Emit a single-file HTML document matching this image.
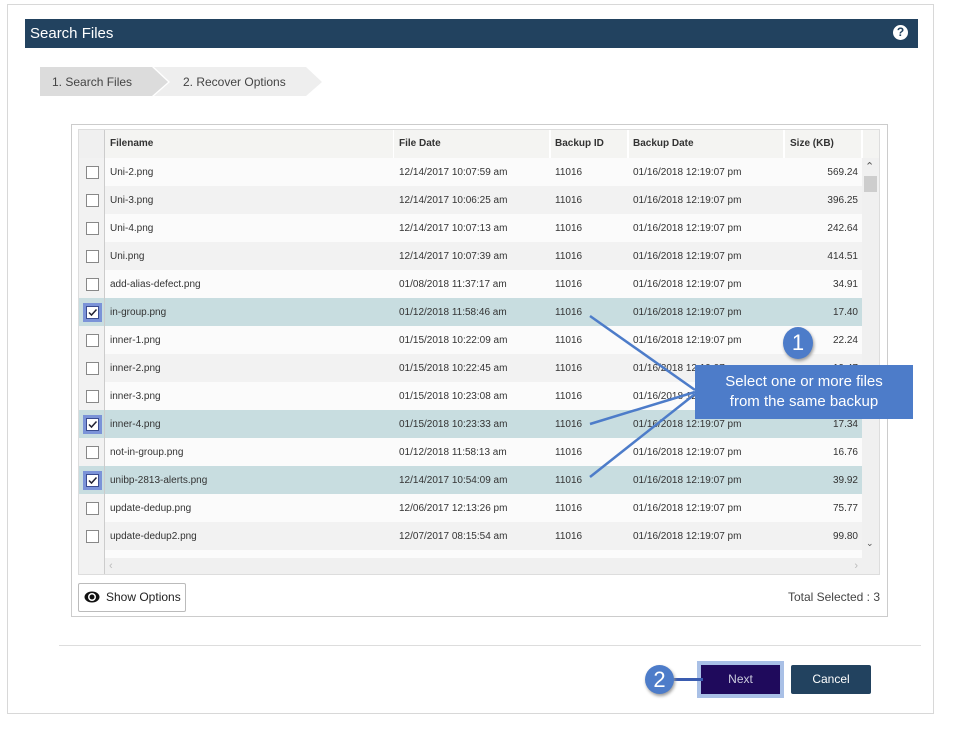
<!DOCTYPE html>
<html><head><meta charset="utf-8"><style>
*{box-sizing:border-box;margin:0;padding:0}
body{width:964px;height:735px;background:#fff;font-family:"Liberation Sans",Arial,sans-serif;position:relative;overflow:hidden}
.abs{position:absolute}
.outer{left:7px;top:4px;width:927px;height:710px;border:1px solid #d8d8d8}
.hdr{left:25px;top:19px;width:893px;height:29px;background:#22425f;color:#fff;font-size:15px;line-height:29px;padding-left:5px}
.help{right:10px;top:6px;width:15px;height:15px;border-radius:50%;background:#fff;color:#22425f;font-weight:bold;font-size:12px;line-height:15px;text-align:center}
.panel{left:71px;top:124px;width:817px;height:493px;border:1px solid #ccc}
.grid{left:78px;top:129px;width:802px;height:446px;border:1px solid #ddd;background:#f0f0f0;overflow:hidden}
.row{position:absolute;left:0;height:28px;width:783px;font-size:10px;color:#333}
.row span{position:absolute;top:1px;line-height:28px}
.cb{position:absolute;left:7px;top:8px;width:13px;height:13px;border:1px solid #888;background:#fff}
.cbcol{position:absolute;left:0;top:0;width:26px;height:28px;background:#f2f2f2;border-right:1px solid #ccc}
.sel .cbcol{background:#c8dde0}
.sel .cb{background:#fff;border-color:#3a4c90;box-shadow:0 0 0 3px #7b93d8}
.th{font-weight:bold;background:#f4f4f2}
.btn{font-size:12px;text-align:center;line-height:29px;color:#fff}
</style></head><body>
<div class="abs outer"></div>
<div class="abs hdr">Search Files<div class="abs help">?</div></div>
<svg class="abs" style="left:40px;top:67px" width="290" height="30">
<polygon points="0,0 112,0 128,15 112,29 0,29" fill="#dcdcdc"/>
<polygon points="114,0 266,0 282,15 266,29 114,29 130,15" fill="#eeeeee"/>
<text x="12" y="19" font-size="12" fill="#444" font-family="Liberation Sans">1. Search Files</text>
<text x="143" y="19" font-size="12" fill="#444" font-family="Liberation Sans">2. Recover Options</text>
</svg>
<div class="abs panel"></div>
<div class="abs grid">
<div class="row th" style="top:0;background:#f4f4f2;width:800px"><div class="cbcol" style="background:#f0f0f0"></div>
<span style="left:31px;top:0">Filename</span><span style="left:320px;top:0">File Date</span><span style="left:476px;top:0">Backup ID</span><span style="left:554px;top:0">Backup Date</span><span style="left:711px;top:0">Size (KB)</span>
<i style="position:absolute;left:314px;top:0;width:1px;height:28px;background:#fff"></i><i style="position:absolute;left:470px;top:0;width:2px;height:28px;background:#fff"></i><i style="position:absolute;left:548px;top:0;width:2px;height:28px;background:#fff"></i><i style="position:absolute;left:704px;top:0;width:2px;height:28px;background:#fff"></i><i style="position:absolute;left:782px;top:0;width:2px;height:28px;background:#fff"></i></div>
<div id="rows"></div>
<div style="position:absolute;left:783px;top:28px;width:17px;height:400px;background:#f0f0f0"></div>
<div style="position:absolute;left:785px;top:46px;width:13px;height:16px;background:#cdcdcd"></div>
<div style="position:absolute;left:786px;top:30px;font-size:11px;color:#555">&#8963;</div>
<div style="position:absolute;left:787px;top:408px;font-size:9px;color:#555">&#8964;</div>
<div style="position:absolute;left:26px;top:428px;width:757px;height:17px;background:#f0f0f0;font-size:11px;color:#bbb;line-height:17px"><span style="position:absolute;left:4px">&lsaquo;</span><span style="position:absolute;right:4px">&rsaquo;</span></div>
</div>
<div class="abs" style="left:78px;top:583px;width:108px;height:29px;border:1px solid #bbb;border-radius:2px;font-size:12px;line-height:27px;padding-left:27px;color:#222">Show Options
<svg style="position:absolute;left:5px;top:6px" width="16" height="14"><ellipse cx="8" cy="7" rx="7.5" ry="5.5" fill="#111"/><circle cx="8" cy="7" r="4" fill="#fff"/><circle cx="8" cy="7" r="2.5" fill="#111"/></svg></div>
<div class="abs" style="right:84px;top:590px;font-size:12px;color:#444">Total Selected : 3</div>
<div class="abs" style="left:59px;top:645px;width:862px;height:1px;background:#ddd"></div>
<div class="abs" style="left:697px;top:661px;width:87px;height:37px;background:#a9c0e6"></div>
<div class="abs btn" style="left:701px;top:665px;width:79px;height:29px;background:#1f0a5c;color:#ccd">Next</div>
<div class="abs btn" style="left:791px;top:665px;width:80px;height:29px;background:#22425f;border-radius:2px">Cancel</div>
<div class="abs" style="left:673px;top:678px;width:30px;height:3px;background:#3a5cb0"></div>
<div class="abs" style="left:645px;top:665px;width:29px;height:29px;border-radius:50%;background:#4d7cc9;color:#fff;font-size:22px;text-align:center;line-height:29px;box-shadow:1px 2px 3px #999">2</div>
<svg class="abs" style="left:0;top:0" width="964" height="735"><g stroke="#4d7cc9" stroke-width="2.5"><line x1="590" y1="316" x2="695" y2="390"/><line x1="590" y1="424" x2="695" y2="392"/><line x1="590" y1="477" x2="695" y2="394"/></g></svg>
<div class="abs" style="left:783px;top:327px;width:30px;height:32px;border-radius:50%;background:#4d7cc9;color:#fff;font-size:22px;text-align:center;line-height:32px;box-shadow:1px 2px 3px #999">1</div>
<div class="abs" style="left:695px;top:365px;width:218px;height:54px;background:#4d7cc9;color:#fff;font-size:15px;text-align:center;line-height:20px;padding-top:7px">Select one or more files<br>from the same backup</div>
<script>
var d=[["Uni-2.png","12/14/2017 10:07:59 am","569.24"],["Uni-3.png","12/14/2017 10:06:25 am","396.25"],["Uni-4.png","12/14/2017 10:07:13 am","242.64"],["Uni.png","12/14/2017 10:07:39 am","414.51"],["add-alias-defect.png","01/08/2018 11:37:17 am","34.91"],["in-group.png","01/12/2018 11:58:46 am","17.40",1],["inner-1.png","01/15/2018 10:22:09 am","22.24"],["inner-2.png","01/15/2018 10:22:45 am","19.47"],["inner-3.png","01/15/2018 10:23:08 am","11.02"],["inner-4.png","01/15/2018 10:23:33 am","17.34",1],["not-in-group.png","01/12/2018 11:58:13 am","16.76"],["unibp-2813-alerts.png","12/14/2017 10:54:09 am","39.92",1],["update-dedup.png","12/06/2017 12:13:26 pm","75.77"],["update-dedup2.png","12/07/2017 08:15:54 am","99.80"],["","","",0,1]];
var h="";d.forEach(function(r,i){var bg=r[3]?"#c8dde0":(i%2?"#f2f2f2":"#fbfbfb");h+='<div class="row'+(r[3]?' sel':'')+'" style="top:'+(28+i*28)+'px;background:'+bg+'"><div class="cbcol"></div>'+(r[4]?'':'<div class="cb">'+(r[3]?'<svg width="11" height="11" style="position:absolute;left:0;top:0"><path d="M2 5.5 L4.5 8 L9.5 2.5" stroke="#223" stroke-width="1.5" fill="none"/></svg>':'')+'</div><span style="left:31px">'+r[0]+'</span><span style="left:320px">'+r[1]+'</span><span style="left:476px">11016</span><span style="left:554px">01/16/2018 12:19:07 pm</span><span style="right:4px">'+r[2]+'</span>')+'</div>'});
document.getElementById("rows").innerHTML=h;
</script>
</body></html>
